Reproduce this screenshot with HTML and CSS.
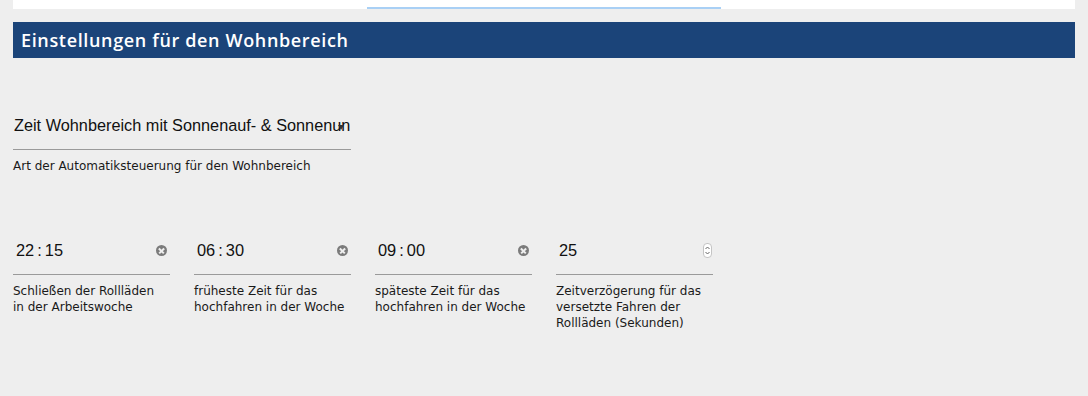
FILE: index.html
```html
<!DOCTYPE html>
<html lang="de">
<head>
    <meta charset="UTF-8">
    <meta name="viewport" content="width=device-width, initial-scale=1.0">
    <title>Einstellungen Wohnbereich</title>
    <link rel="stylesheet" href="styles.css">
</head>
<body>
    <div class="topbar">
        <div class="tab-indicator"></div>
    </div>

    <h1 class="section-title">Einstellungen für den Wohnbereich</h1>

    <div class="select-group">
        <div class="field select-field">
            <span class="select-value">Zeit Wohnbereich mit Sonnenauf- &amp; Sonnenun</span>
            <span class="select-arrow"></span>
        </div>
        <div class="hint">Art der Automatiksteuerung für den Wohnbereich</div>
    </div>

    <div class="time-row">
        <div class="time-group">
            <div class="field">
                <span class="value">22<span class="colon">:</span>15</span>
                <span class="clear-btn"></span>
            </div>
            <div class="hint">Schließen der Rollläden<br>in der Arbeitswoche</div>
        </div>
        <div class="time-group">
            <div class="field">
                <span class="value">06<span class="colon">:</span>30</span>
                <span class="clear-btn"></span>
            </div>
            <div class="hint">früheste Zeit für das<br>hochfahren in der Woche</div>
        </div>
        <div class="time-group">
            <div class="field">
                <span class="value">09<span class="colon">:</span>00</span>
                <span class="clear-btn"></span>
            </div>
            <div class="hint">späteste Zeit für das<br>hochfahren in der Woche</div>
        </div>
        <div class="time-group">
            <div class="field">
                <span class="value">25</span>
                <span class="spinner">
                    <svg width="7" height="11" viewBox="0 0 7 11">
                        <path d="M1.5 4 L3.5 2 L5.5 4" fill="none" stroke="#666" stroke-width="1"/>
                        <path d="M1.5 7 L3.5 9 L5.5 7" fill="none" stroke="#666" stroke-width="1"/>
                    </svg>
                </span>
            </div>
            <div class="hint">Zeitverzögerung für das<br>versetzte Fahren der<br>Rollläden (Sekunden)</div>
        </div>
    </div>
</body>
</html>
```

FILE: styles.css
```css
body {
    margin: 0;
    padding: 0 13px;
    background-color: #eeeeee;
    font-family: "Liberation Sans", Arial, sans-serif;
    color: #111;
}

.topbar {
    width: 1062px;
    height: 9px;
    background-color: #fff;
    display: flex;
    align-items: flex-end;
}

.tab-indicator {
    margin-left: 354px;
    width: 354px;
    height: 2px;
    background-color: #a9d0f5;
}

.section-title {
    width: 1062px;
    height: 36px;
    margin: 13px 0 0 0;
    padding: 0 8px;
    box-sizing: border-box;
    background-color: #1b4479;
    color: #fff;
    font-family: "Open Sans", "DejaVu Sans", sans-serif;
    font-size: 18px;
    font-weight: 600;
    letter-spacing: 0.65px;
    line-height: 37px;
}

.select-group {
    width: 338px;
    margin-top: 57px;
}

.field {
    position: relative;
    display: flex;
    align-items: center;
    height: 20px;
    padding-bottom: 14px;
    border-bottom: 1px solid #9a9a9a;
    font-size: 16px;
    line-height: 20px;
}

.select-value {
    padding-left: 1px;
    font-size: 16.3px;
    white-space: nowrap;
}

.select-arrow {
    position: absolute;
    left: 325px;
    top: 10px;
    width: 0;
    height: 0;
    border-left: 3px solid transparent;
    border-right: 3px solid transparent;
    border-top: 5px solid #333;
}

.hint {
    margin-top: 8px;
    font-family: "DejaVu Sans", sans-serif;
    font-size: 12px;
    line-height: 16px;
    color: #1a1a1a;
}

.time-row {
    display: flex;
    gap: 24px;
    margin-top: 66px;
}

.time-group {
    width: 157px;
}

.time-group .value {
    flex: 1;
    padding-left: 3px;
    font-size: 16.4px;
}

.colon {
    margin: 0 3px;
}

.clear-btn {
    position: relative;
    width: 11px;
    height: 11px;
    margin-right: 3px;
    border-radius: 50%;
    background-color: #7b7b7b;
}

.clear-btn::before,
.clear-btn::after {
    content: "";
    position: absolute;
    left: 2px;
    top: 5px;
    width: 7px;
    height: 1.5px;
    background-color: #eee;
    transform: rotate(45deg);
}

.clear-btn::after {
    transform: rotate(-45deg);
}

.spinner {
    display: flex;
    align-items: center;
    justify-content: center;
    width: 7px;
    height: 13px;
    margin-right: 1px;
    border: 1px solid #c4c4c4;
    border-radius: 4px;
    background-color: #fff;
}
```
